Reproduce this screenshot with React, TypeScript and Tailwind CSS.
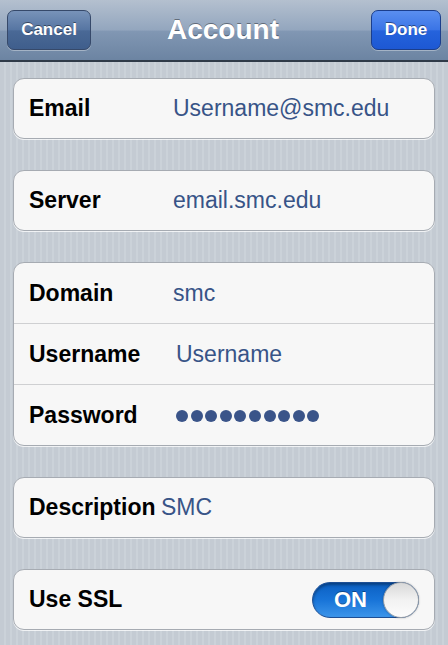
import React from "react";

const font = { fontFamily: '"Liberation Sans", Arial, Helvetica, sans-serif' };

function Row({
  label,
  labelW,
  children,
  divider,
  h,
}: {
  label: string;
  labelW: string;
  children: React.ReactNode;
  divider?: boolean;
  h: string;
}) {
  return (
    <div
      className={
        "flex items-center pl-[15px] pr-[14px] " +
        h +
        " " +
        (divider ? "border-t border-[#cfd0d2]" : "")
      }
    >
      <div className={"shrink-0 text-[23px] font-bold text-black " + labelW}>{label}</div>
      <div className="flex-1 text-[23px] text-[#385487] whitespace-nowrap">{children}</div>
    </div>
  );
}

function Card({ children }: { children: React.ReactNode }) {
  return (
    <div className="mx-[13px] rounded-[11px] border border-[#a6abb2] bg-[#f7f7f7] shadow-[0_1px_0_rgba(255,255,255,0.75)] overflow-hidden">
      {children}
    </div>
  );
}

export default function App() {
  return (
    <div
      style={font}
      className="w-[448px] min-h-[645px] bg-[repeating-linear-gradient(90deg,#c4cbd3_0px,#c4cbd3_4px,#cbd2d9_4px,#cbd2d9_6px)] overflow-hidden"
    >
      {/* Nav bar */}
      <div className="relative h-[62px] border-b-[2px] border-[#2f3a48] bg-[linear-gradient(180deg,#b4c0cf_0%,#93a6be_50%,#8197b3_52%,#6c84a2_100%)] flex items-center justify-between px-[7px]">
        <div className="w-[84px] h-[40px] rounded-[7px] border border-[#36496a] bg-[linear-gradient(180deg,#7893b9_0%,#5675a2_50%,#4a6996_52%,#3f5e8c_100%)] shadow-[0_1px_0_rgba(255,255,255,0.35)] flex items-center justify-center">
          <span className="text-white font-bold text-[17px] [text-shadow:0_-1px_0_rgba(0,0,0,0.45)]">Cancel</span>
        </div>
        <div className="absolute left-0 right-0 top-0 h-[60px] flex items-center justify-center pointer-events-none">
          <span className="text-white font-bold text-[28px] [text-shadow:0_-1px_0_rgba(0,0,0,0.4)] ml-[-2px]">Account</span>
        </div>
        <div className="w-[70px] h-[40px] rounded-[7px] border border-[#1b3e8c] bg-[linear-gradient(180deg,#5a8ff0_0%,#3a74e6_50%,#2563dc_52%,#1d58d3_100%)] shadow-[0_1px_0_rgba(255,255,255,0.35)] flex items-center justify-center">
          <span className="text-white font-bold text-[17px] [text-shadow:0_-1px_0_rgba(0,0,0,0.45)]">Done</span>
        </div>
      </div>

      <div className="flex flex-col gap-[31px] pt-[16px] pb-[16px]">
        <Card>
          <Row label="Email" labelW="w-[144px]" h="h-[59px]">Username@smc.edu</Row>
        </Card>
        <Card>
          <Row label="Server" labelW="w-[144px]" h="h-[59px]">email.smc.edu</Row>
        </Card>
        <Card>
          <Row label="Domain" labelW="w-[144px]" h="h-[60px]">smc</Row>
          <Row label="Username" labelW="w-[147px]" h="h-[61px]" divider>
            Username
          </Row>
          <Row label="Password" labelW="w-[147px]" h="h-[61px]" divider>
            <div className="flex items-center gap-[2.6px] pt-[2px]">
              {Array.from({ length: 10 }).map((_, i) => (
                <div key={i} className="w-[12px] h-[12px] rounded-full bg-[#3a5489]" />
              ))}
            </div>
          </Row>
        </Card>
        <Card>
          <Row label="Description" labelW="w-[132px]" h="h-[59px]">SMC</Row>
        </Card>
        <Card>
          <div className="flex items-center h-[59px] pl-[15px] pr-[15px] justify-between">
            <div className="text-[23px] font-bold text-black">Use SSL</div>
            <div className="relative w-[107px] h-[36px] rounded-full border border-[#1d4f95] bg-[linear-gradient(180deg,#0b5fc2_0%,#1874d8_50%,#3c95ea_100%)] shadow-[inset_0_2px_3px_rgba(0,0,0,0.35)] flex items-center">
              <span className="ml-[21px] text-white font-bold text-[22px] [text-shadow:0_-1px_0_rgba(0,0,0,0.35)]">ON</span>
              <div className="absolute right-[-1px] top-[-1px] w-[36px] h-[36px] rounded-full border border-[#9aa0a8] bg-[linear-gradient(180deg,#d8d8d8_0%,#f2f2f2_50%,#fcfcfc_100%)] shadow-[0_0_2px_rgba(0,0,0,0.3)]" />
            </div>
          </div>
        </Card>
      </div>
    </div>
  );
}
